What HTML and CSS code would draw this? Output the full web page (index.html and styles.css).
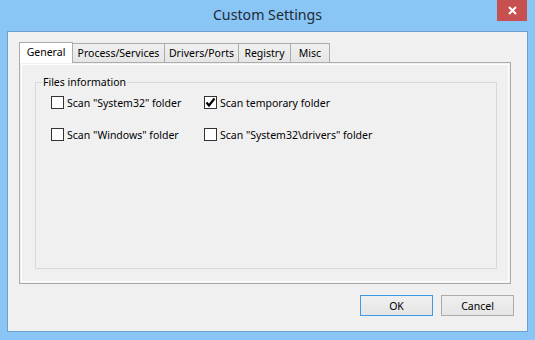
FILE: index.html
```html
<!DOCTYPE html>
<html lang="en">
<head>
    <meta charset="UTF-8">
    <title>Custom Settings</title>
    <link rel="stylesheet" href="styles.css">
</head>
<body>
    <div class="window">
        <div class="titlebar">
            <span></span>
            <div class="title">Custom Settings</div>
            <div class="close">
                <svg width="9" height="9" viewBox="0 0 9 9">
                    <path d="M1 1 L8 8 M8 1 L1 8" stroke="#fff" stroke-width="2"/>
                </svg>
            </div>
        </div>
        <div class="client">
            <div class="tabs">
                <div class="tab active" style="width: 54px">General</div>
                <div class="tab" style="width: 93px">Process/Services</div>
                <div class="tab" style="width: 75px">Drivers/Ports</div>
                <div class="tab" style="width: 53px">Registry</div>
                <div class="tab" style="width: 40px">Misc</div>
            </div>
            <div class="panel">
                <fieldset class="group">
                    <legend>Files information</legend>
                    <div class="options">
                        <label class="check"><span class="box"></span>Scan "System32" folder</label>
                        <label class="check"><span class="box">
                            <svg width="11" height="11" viewBox="0 0 11 11">
                                <path d="M1.5 5.5 L4 8.5 L9.5 1.5" fill="none" stroke="#000" stroke-width="2.2"/>
                            </svg>
                        </span>Scan temporary folder</label>
                        <label class="check"><span class="box"></span>Scan "Windows" folder</label>
                        <label class="check"><span class="box"></span>Scan "System32\drivers" folder</label>
                    </div>
                </fieldset>
            </div>
            <div class="buttons">
                <button class="btn default">OK</button>
                <button class="btn">Cancel</button>
            </div>
        </div>
    </div>
</body>
</html>
```

FILE: styles.css
```css
body {
    margin: 0;
    font-family: "Noto Sans", "Open Sans", sans-serif;
    font-size: 10.5px;
    color: #000;
}
.window {
    width: 535px;
    height: 340px;
    background-color: #89c5f5;
    display: flex;
    flex-direction: column;
}
.titlebar {
    height: 31px;
    display: grid;
    grid-template-columns: 1fr auto 1fr;
}
.title {
    font-size: 14.2px;
    color: #1f2a36;
    line-height: 31px;
    margin-top: -1px;
}
.close {
    justify-self: end;
    margin-right: 8px;
    width: 30px;
    height: 21px;
    background-color: #c75050;
    display: flex;
    align-items: center;
    justify-content: center;
}
.client {
    flex: 1;
    margin: 0 7px 8px 7px;
    border: 1px solid #6ba0d0;
    background-color: #f0f0f0;
    padding: 10px 0 0 11px;
}
.tabs {
    display: flex;
    align-items: flex-end;
    height: 20px;
}
.tab {
    box-sizing: border-box;
    height: 19px;
    border: 1px solid #acacac;
    border-bottom: none;
    margin-left: -1px;
    background: linear-gradient(#f0f0f0, #e5e5e5);
    text-align: center;
    line-height: 18px;
    white-space: nowrap;
}
.tab:first-child {
    margin-left: 0;
}
.tab.active {
    height: 21px;
    margin-bottom: -1px;
    background: #fff;
    line-height: 19px;
    position: relative;
    z-index: 1;
}
.panel {
    box-sizing: border-box;
    width: 492px;
    height: 222px;
    border: 1px solid #acacac;
    box-shadow: inset 0 0 0 1px #f0f0f0, inset 0 0 0 2px #fff;
    padding: 12px 13px 15px 15px;
}
.group {
    box-sizing: border-box;
    height: 194px;
    margin: 0;
    border: 1px solid #d9d9d9;
    padding: 0 0 0 15px;
}
.group legend {
    padding: 0 1px;
    margin-left: -9px;
    line-height: 14px;
}
.options {
    display: grid;
    grid-template-columns: 153px 1fr;
    row-gap: 17px;
    margin-top: 6px;
}
.check {
    display: flex;
    align-items: center;
    height: 15px;
    white-space: nowrap;
}
.box {
    box-sizing: border-box;
    width: 13px;
    height: 13px;
    border: 1px solid #333;
    background-color: #fff;
    margin-right: 3px;
    display: flex;
    align-items: center;
    justify-content: center;
}
.buttons {
    display: flex;
    justify-content: flex-end;
    gap: 8px;
    margin: 11px 13px 0 0;
}
.btn {
    box-sizing: border-box;
    width: 73px;
    height: 21px;
    border: 1px solid #acacac;
    background: linear-gradient(#f0f0f0, #e5e5e5);
    font-family: inherit;
    font-size: 10.5px;
    color: #000;
    padding: 0;
}
.btn.default {
    border-color: #3c9ae8;
}
```
